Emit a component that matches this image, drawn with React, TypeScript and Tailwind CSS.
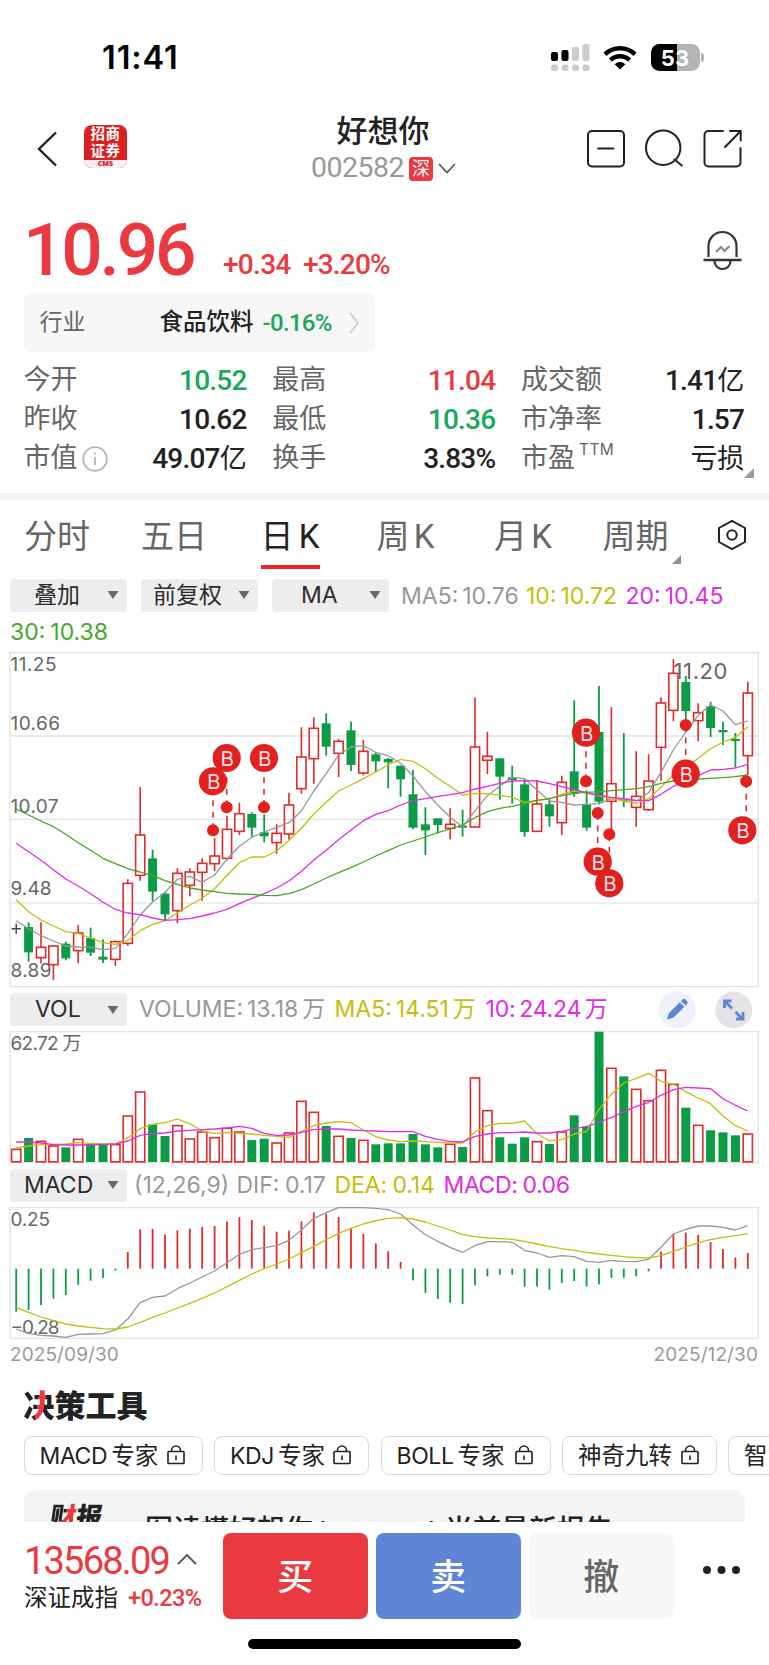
import React from 'react';

type Candle = [kind: 'R' | 'G', high: number, top: number, bottom: number, low: number];

const RED = '#e12a2a';
const GREEN = '#0d9c46';
const GRAY = '#97979b';
const YELLOW = '#c2bf0c';
const MAGENTA = '#e02be6';
const LEAF = '#46a628';

const xAt = (i: number) => 16.2 + 12.4 * i;
const px = (base: number) => (v: number) => base + v / 3;
const priceY = px(645);
const volY = px(985);
const macdY = px(1170);

const candles: Candle[] = [
  ['G', 832, 846, 922, 950], ['R', 832, 907, 938, 955], ['R', 900, 903, 959, 1005], ['G', 891, 896, 940, 946],
  ['R', 840, 864, 917, 955], ['G', 848, 879, 923, 933], ['G', 883, 935, 944, 954], ['R', 886, 890, 943, 963],
  ['R', 703, 715, 895, 902], ['R', 426, 570, 691, 707], ['G', 614, 640, 740, 768], ['G', 742, 746, 808, 826],
  ['R', 670, 685, 797, 835], ['R', 670, 681, 721, 754], ['R', 640, 655, 682, 767], ['R', 580, 633, 656, 678],
  ['R', 512, 553, 640, 647], ['R', 473, 506, 559, 570], ['G', 502, 507, 548, 575], ['G', 508, 562, 574, 592],
  ['R', 538, 565, 593, 626], ['R', 443, 480, 567, 584], ['R', 247, 336, 431, 446], ['R', 217, 250, 341, 416],
  ['G', 205, 235, 305, 332], ['R', 281, 289, 325, 396], ['G', 230, 256, 360, 378], ['R', 285, 319, 384, 391],
  ['G', 321, 328, 349, 381], ['G', 339, 342, 352, 430], ['G', 362, 362, 403, 455], ['G', 375, 448, 548, 553],
  ['G', 487, 538, 556, 630], ['G', 520, 520, 540, 565], ['R', 490, 538, 550, 583], ['G', 494, 542, 548, 575],
  ['R', 157, 306, 546, 546], ['R', 260, 334, 346, 387], ['G', 340, 340, 395, 464], ['G', 362, 397, 405, 476],
  ['G', 400, 418, 561, 575], ['R', 405, 477, 559, 559], ['G', 458, 478, 514, 545], ['R', 392, 412, 533, 570],
  ['G', 166, 379, 446, 455], ['G', 436, 478, 548, 557], ['G', 123, 261, 470, 478], ['R', 187, 416, 469, 565],
  ['G', 264, 461, 467, 486], ['R', 319, 454, 487, 545], ['R', 328, 408, 494, 497], ['R', 157, 174, 307, 407],
  ['R', 43, 85, 196, 229], ['G', 93, 111, 198, 225], ['R', 175, 203, 227, 289], ['G', 170, 184, 249, 276],
  ['G', 230, 255, 262, 300], ['G', 264, 282, 288, 366], ['R', 110, 144, 332, 390],
];

const ma5 = [827, 851, 872, 888, 903, 906, 907, 914, 911, 866, 810, 771, 742, 703, 694, 712, 690, 642, 604, 577, 561, 547, 533, 498, 438, 386, 330, 306, 302, 322, 332, 355, 393, 440, 480, 517, 546, 497, 452, 423, 397, 401, 435, 468, 472, 480, 478, 476, 461, 463, 468, 443, 382, 315, 261, 211, 180, 198, 239, 228];
const ma10 = [764, 800, 825, 843, 860, 865, 879, 893, 898, 886, 857, 838, 827, 804, 780, 760, 731, 691, 653, 636, 636, 618, 586, 550, 507, 472, 438, 420, 401, 381, 359, 343, 349, 371, 400, 424, 450, 445, 446, 451, 457, 472, 466, 462, 448, 438, 441, 453, 461, 468, 475, 461, 427, 390, 368, 340, 311, 291, 277, 245];
const ma20 = [595, 620, 646, 674, 702, 723, 746, 772, 793, 804, 809, 819, 826, 824, 821, 813, 804, 793, 776, 760, 746, 729, 708, 679, 645, 616, 584, 555, 527, 508, 497, 480, 467, 461, 454, 449, 443, 432, 424, 415, 408, 407, 408, 416, 425, 434, 444, 451, 457, 461, 466, 467, 448, 424, 406, 392, 375, 373, 369, 358];
const ma30 = [492, 510, 528, 545, 568, 593, 616, 640, 656, 671, 681, 692, 707, 718, 729, 735, 740, 745, 747, 748, 751, 752, 746, 734, 717, 699, 683, 668, 651, 633, 617, 600, 588, 576, 563, 552, 540, 518, 500, 490, 484, 476, 466, 461, 452, 445, 442, 440, 437, 434, 431, 425, 415, 408, 405, 402, 400, 398, 395, 390];

const volTops = [493, 459, 469, 483, 487, 463, 477, 479, 479, 393, 321, 418, 453, 422, 462, 441, 458, 430, 441, 465, 461, 474, 444, 349, 382, 423, 454, 459, 466, 478, 475, 475, 447, 478, 487, 478, 486, 279, 377, 457, 476, 457, 470, 477, 441, 391, 424, 140, 250, 274, 313, 347, 256, 298, 368, 421, 436, 442, 451, 447];
const volKinds = ['RGRRGRGGRR', 'RGGRRRRRRG', 'GRRRRGRGRG', 'GGGGGRGRRG', 'GGRGRGGGRG', 'RRRRGRGGGR'].join('');
const volMa5 = [489, 483, 479, 478, 477, 473, 475, 477, 477, 458, 431, 418, 413, 402, 416, 438, 446, 443, 445, 447, 451, 454, 457, 439, 422, 414, 410, 413, 435, 455, 465, 470, 468, 470, 472, 474, 474, 441, 422, 415, 415, 408, 446, 467, 464, 447, 440, 373, 328, 294, 280, 265, 289, 298, 320, 339, 356, 393, 422, 438];
const volMa10 = [471, 471, 474, 479, 480, 480, 480, 478, 477, 468, 451, 446, 444, 438, 436, 434, 432, 429, 424, 430, 445, 451, 450, 442, 434, 432, 432, 435, 437, 438, 440, 440, 440, 454, 463, 469, 471, 454, 447, 443, 443, 441, 444, 444, 439, 431, 425, 411, 398, 380, 364, 352, 331, 314, 307, 309, 311, 341, 361, 378];

const macdBars = [425, 420, 405, 386, 375, 344, 332, 324, 302, 246, 178, 177, 194, 181, 176, 171, 168, 154, 141, 150, 168, 185, 182, 154, 127, 132, 141, 174, 192, 220, 244, 276, 331, 369, 387, 398, 402, 346, 319, 314, 314, 350, 350, 359, 339, 333, 350, 343, 324, 323, 319, 304, 245, 191, 188, 195, 216, 237, 262, 249];
const dif = [477, 490, 496, 498, 502, 493, 492, 491, 480, 447, 398, 382, 378, 356, 339, 321, 303, 278, 253, 239, 233, 227, 211, 180, 145, 128, 113, 113, 113, 115, 119, 132, 165, 194, 214, 232, 247, 227, 215, 215, 217, 241, 249, 262, 257, 260, 274, 277, 271, 274, 275, 268, 232, 192, 178, 168, 168, 172, 180, 167];
const dea = [412, 427, 441, 452, 462, 468, 472, 476, 477, 471, 457, 442, 429, 414, 400, 385, 369, 350, 331, 312, 296, 282, 267, 248, 229, 209, 190, 175, 162, 152, 145, 143, 147, 156, 168, 180, 194, 200, 204, 206, 208, 214, 222, 230, 236, 241, 247, 252, 256, 260, 263, 264, 257, 244, 231, 218, 209, 202, 197, 191];

const markers = [
  { x: 226.7, b: 758, dot: 807.3, bx: 226.7 },
  { x: 213, b: 781.3, dot: 830.3, bx: 213 },
  { x: 264, b: 758, dot: 807.3, bx: 264 },
  { x: 586, b: 732.7, dot: 781.3, bx: 586 },
  { x: 597.7, b: 861.7, dot: 813, bx: 597.7 },
  { x: 609.3, b: 883.3, dot: 834.3, bx: 609.3 },
  { x: 685.7, b: 773.7, dot: 725, bx: 685.7 },
  { x: 746.2, b: 830.3, dot: 781.3, bx: 742.3 },
];

function Line({ data, y, color }: { data: number[]; y: (v: number) => number; color: string }) {
  return (
    <polyline
      points={data.map((v, i) => `${xAt(i).toFixed(1)},${y(v).toFixed(1)}`).join(' ')}
      fill="none"
      stroke={color}
      strokeWidth="1.3"
      strokeLinejoin="round"
    />
  );
}

function Label({ x, y, w, size = 19, color = '#666', children }: { x: number; y: number; w: number; size?: number; color?: string; children: string }) {
  return (
    <text x={x} y={y} fontSize={size} fill={color} textLength={w} className="font-[family-name:Inter,'Noto_Sans_CJK_SC',sans-serif]">
      {children}
    </text>
  );
}

function PriceChart() {
  return (
    <svg width="769" height="338" viewBox="0 651 769 338" className="block shrink-0">
      <g stroke="#e3e3e4" strokeWidth="1.3" fill="none">
        <rect x="10" y="652.6" width="748.3" height="334" />
        <path d="M10 736H758M10 819.4H758M10 903.1H758" />
      </g>
      <Label x={10.5} y={671} w={46}>11.25</Label>
      <Label x={10.5} y={730.4} w={49.5}>10.66</Label>
      <Label x={10.5} y={812.6} w={48}>10.07</Label>
      <Label x={10.5} y={894.6} w={41}>9.48</Label>
      <Label x={10.5} y={976.5} w={41}>8.89</Label>
      <path d="M16.2 923.5V934M11.6 928.8H20.8" stroke="#444" strokeWidth="1.4" />
      {candles.map(([kind, h, t, b, l], n) => {
        const x = xAt(n + 1);
        if (kind === 'G') {
          return (
            <g key={n} fill={GREEN}>
              <rect x={x - 0.9} y={priceY(h)} width="1.8" height={(l - h) / 3} />
              <rect x={x - 4.5} y={priceY(t)} width="9" height={(b - t) / 3} />
            </g>
          );
        }
        return (
          <g key={n} stroke={RED} strokeWidth="1.6" fill="none">
            <path d={`M${x} ${priceY(h)}V${priceY(t)}M${x} ${priceY(b)}V${priceY(l)}`} />
            <rect x={x - 4.6} y={priceY(t)} width="9.2" height={(b - t) / 3} />
          </g>
        );
      })}
      <Line data={ma5} y={priceY} color={GRAY} />
      <Line data={ma10} y={priceY} color={YELLOW} />
      <Line data={ma20} y={priceY} color={MAGENTA} />
      <Line data={ma30} y={priceY} color={LEAF} />
      <Label x={673.5} y={679.3} w={54} size={22}>11.20</Label>
      {markers.map((m, i) => (
        <g key={i}>
          <path d={`M${m.x} ${m.dot}V${m.b}`} stroke="#e22020" strokeWidth="1.5" strokeDasharray="6 5.5" strokeDashoffset="-1" />
          <circle cx={m.x} cy={m.dot} r="6" fill="#e22020" />
        </g>
      ))}
      {markers.map((m, i) => (
        <g key={i}>
          <circle cx={m.bx} cy={m.b} r="14.1" fill="#e22020" />
          <text x={m.bx + 0.6} y={m.b + 7.8} fontSize="20.5" fill="#fff" fillOpacity=".88" textAnchor="middle" className="font-[family-name:Inter,sans-serif]">B</text>
        </g>
      ))}
    </svg>
  );
}

function VolumeChart() {
  return (
    <svg width="769" height="134" viewBox="0 1030 769 134" className="block shrink-0">
      <rect x="10" y="1031.6" width="748.3" height="131" fill="none" stroke="#e3e3e4" strokeWidth="1.3" />
      <Label x={10.5} y={1050} w={71}>62.72 万</Label>
      {volTops.map((t, i) =>
        volKinds[i] === 'G' ? (
          <rect key={i} x={xAt(i) - 4.5} y={volY(t)} width="9" height={(531 - t) / 3} fill={GREEN} />
        ) : (
          <rect key={i} x={xAt(i) - 4.6} y={volY(t)} width="9.2" height={(530.5 - t) / 3} fill="none" stroke={RED} strokeWidth="1.6" />
        ),
      )}
      <Line data={volMa5} y={volY} color={YELLOW} />
      <Line data={volMa10} y={volY} color={MAGENTA} />
    </svg>
  );
}

function MacdChart() {
  return (
    <svg width="769" height="134" viewBox="0 1206 769 134" className="block shrink-0">
      <rect x="10" y="1207.6" width="748.3" height="130.8" fill="none" stroke="#e3e3e4" strokeWidth="1.3" />
      <Label x={10.5} y={1226.4} w={39.5}>0.25</Label>
      <Label x={10.5} y={1334.2} w={49}>−0.28</Label>
      {macdBars.map((v, i) => (
        <rect
          key={i}
          x={xAt(i) - 0.9}
          y={macdY(Math.min(v, 296))}
          width="1.8"
          height={Math.abs(v - 296) / 3}
          fill={v > 296 ? GREEN : RED}
        />
      ))}
      <Line data={dif} y={macdY} color={GRAY} />
      <Line data={dea} y={macdY} color={YELLOW} />
    </svg>
  );
}

function Chip({ children, className }: { children: React.ReactNode; className: string }) {
  return (
    <div className="flex h-[33px] w-[117px] shrink-0 items-center rounded-[4px] bg-[#ededed] text-[23px] leading-[33px] text-[#2c2c2e]">
      <span className={className}>{children}</span>
      <svg width="12" height="8" viewBox="0 0 12 8" className="mr-[8px] ml-auto">
        <path d="M0.5 0H11.5L6 8Z" fill="#69696b" />
      </svg>
    </div>
  );
}

function Lock() {
  return (
    <svg width="18" height="20" viewBox="0 0 18 20" fill="none" stroke="#222" strokeWidth="1.6" className="mb-[1px]">
      <rect x="1" y="6.5" width="16" height="12" rx="0.8" />
      <path d="M4.5 6.5V5.5a4.5 4.5 0 0 1 9 0V6.5M9 10.5v4.5" />
    </svg>
  );
}

const tools = [
  { latin: 'MACD', name: '专家', box: 'w-[179px]' },
  { latin: 'KDJ', name: '专家', box: 'w-[155px]' },
  { latin: 'BOLL', name: '专家', box: 'w-[170px]' },
  { latin: '', name: '神奇九转', box: 'w-[154.5px]' },
  { latin: '', name: '智能', box: 'w-[155px]' },
];

const stats = [
  [['今开', '10.52', '', 'text-[#1ba75c]'], ['最高', '11.04', '', 'text-[#eb3941]'], ['成交额', '1.41', '亿', 'text-[#222]']],
  [['昨收', '10.62', '', 'text-[#222]'], ['最低', '10.36', '', 'text-[#1ba75c]'], ['市净率', '1.57', '', 'text-[#222]']],
  [['市值', '49.07', '亿', 'text-[#222]'], ['换手', '3.83%', '', 'text-[#222]'], ['市盈', '', '亏损', 'text-[#222]']],
];

export default function App() {
  return (
    <main className="flex h-[1665px] w-[769px] flex-col overflow-hidden bg-white font-[family-name:Roboto,'Noto_Sans_CJK_SC',sans-serif] text-[#222]">
      {/* Status bar */}
      <div className="flex h-[115px] shrink-0 items-center pl-[102px] font-[family-name:Inter,sans-serif]">
        <span className="w-[448.5px] pt-[1px] text-[32.5px] leading-none font-semibold tracking-[0.9px] text-black">11:41</span>
        <svg width="39" height="28" viewBox="0 0 39 28">
          <rect x="0" y="8" width="7" height="9" rx="2" fill="#000" />
          <rect x="10.5" y="6" width="7" height="11" rx="2" fill="#000" />
          <rect x="21" y="3" width="7" height="14" rx="2" fill="#ccc" />
          <rect x="31.5" y="0" width="7" height="17" rx="2" fill="#ccc" />
          <g fill="#ccc">
            <rect x="0" y="20.5" width="7" height="6.5" rx="2.5" />
            <rect x="10.5" y="20.5" width="7" height="6.5" rx="2.5" />
            <rect x="21" y="20.5" width="7" height="6.5" rx="2.5" />
            <rect x="31.5" y="20.5" width="7" height="6.5" rx="2.5" />
          </g>
        </svg>
        <svg width="34" height="25" viewBox="0 0 34 25" className="ml-[13px]">
          <g fill="none" stroke="#000" strokeWidth="4.4">
            <path d="M2 9.4a21.5 21.5 0 0 1 30 0" />
            <path d="M7.4 15.1a13.8 13.8 0 0 1 19.2 0" />
          </g>
          <path d="M17 24.6 11.7 19.2a7.6 7.6 0 0 1 10.6 0Z" fill="#000" />
        </svg>
        <div className="ml-[14px] flex h-[27px] w-[49px] items-center justify-center rounded-[8.5px] bg-[linear-gradient(90deg,#000_53%,#b3b3b3_53%)] text-[22px] leading-none font-bold text-white">53</div>
        <span className="ml-[1.5px] h-[9px] w-[3px] rounded-r-full bg-[#b3b3b3]" />
      </div>

      {/* Title bar */}
      <header className="flex h-[85px] shrink-0">
        <svg width="22" height="36" viewBox="0 0 22 36" className="mt-[16px] ml-[36px]" fill="none" stroke="#222" strokeWidth="2.4">
          <path d="M20 1.5 3 18 20 34.5" />
        </svg>
        <div className="mt-[10px] ml-[26px] flex h-[43px] w-[43px] flex-col items-center overflow-hidden rounded-[8px] bg-[#dc1f20] text-[14.5px] text-white">
          <span className="h-[18px] leading-[20px] font-bold tracking-[0.5px]">招商</span>
          <span className="h-[17px] leading-[17px] font-bold tracking-[0.5px]">证券</span>
          <span className="h-[8px] w-full bg-[#f6f0f0] text-center font-['Open_Sans',sans-serif] text-[7px] leading-[7px] font-extrabold text-[#dc1f20]">CMS</span>
        </div>
        <div className="ml-[127.5px] flex w-[257px] flex-col items-center">
          <h1 className="h-[34px] text-[31px] leading-[34px] font-medium">好想你</h1>
          <div className="mt-[3px] ml-[1px] flex h-[33px] items-center">
            <span className="text-[28.5px] leading-none tracking-[-0.5px] text-[#999]">002582</span>
            <span className="ml-[5px] flex h-[24px] w-[24px] items-center justify-center rounded-[4px] bg-[#eb3941] text-[18px] leading-none text-white">深</span>
            <svg width="18" height="11" viewBox="0 0 18 11" className="ml-[5px]" fill="none" stroke="#555" strokeWidth="1.7">
              <path d="M1 1 9 9.5 17 1" />
            </svg>
          </div>
        </div>
        <svg width="160" height="42" viewBox="586 128 160 42" className="mt-[13px] mr-[24px] ml-auto" fill="none" stroke="#222" strokeWidth="2">
          <rect x="589" y="131" width="36" height="35.5" rx="4" />
          <path d="M599 148.5h15.5" strokeLinecap="round" />
          <circle cx="664.2" cy="147.7" r="17.2" />
          <path d="M675.5 159.5l7.3 6" strokeLinecap="round" />
          <path d="M724 131h-14.5a4 4 0 0 0-4 4v27.5a4 4 0 0 0 4 4h28a4 4 0 0 0 4-4V148M726 147l15.5-15.7M731 131h10.7v9.5" strokeLinecap="round" />
        </svg>
      </header>

      {/* Price */}
      <section className="flex h-[93px] shrink-0 items-start pl-[23px] font-medium text-[#eb3941]">
        <span className="mt-[13px] w-[200px] text-[73px] leading-[74px] tracking-[-3.2px]">10.96</span>
        <span className="mt-[49px] w-[80px] text-[28px] leading-[32px] tracking-[-0.7px]">+0.34</span>
        <span className="mt-[49px] text-[28px] leading-[32px] tracking-[-0.8px]">+3.20%</span>
        <svg width="42" height="42" viewBox="702 229 42 42" className="mt-[29px] mr-[26px] ml-auto" fill="none" stroke="#333" strokeWidth="2.2">
          <path d="M709.5 257V246a14 14 0 0 1 28 0v11" />
          <path d="M704.5 260h38" strokeWidth="2.4" />
          <path d="M715.5 261a8 8 0 0 0 16 0" />
          <path d="M717 252l5-5 3.5 4 5-5" stroke="#888" />
        </svg>
      </section>

      <section className="ml-6 flex h-[59px] w-[351px] shrink-0 items-center rounded-[6px] bg-[#f7f7f7] pl-[15.5px]">
        <span className="mt-[2px] w-[120px] text-[23px] text-[#666]">行业</span>
        <span className="mt-[1px] text-[23.5px] font-medium">食品饮料</span>
        <span className="ml-[9px] text-[24px] font-medium tracking-[-0.7px] text-[#1ba75c]">-0.16%</span>
        <svg width="12" height="22" viewBox="0 0 12 22" className="mr-[15px] ml-auto" fill="none" stroke="#ccc" strokeWidth="1.8">
          <path d="M2 1l8 10-8 10" />
        </svg>
      </section>

      {/* Stats */}
      <section className="mt-[9px] flex h-[132px] shrink-0 flex-col pl-[23.5px]">
        {stats.map((row, r) => (
          <div key={r} className="flex h-[39px] gap-[25.8px] text-[27px] leading-[39px]">
            {row.map(([name, value, unit, tone], c) => (
              <div key={name} className="flex w-[223px] items-center justify-between">
                <span className="flex items-center text-[27px] text-[#666]">
                  {name}
                  {name === '市值' && (
                    <svg width="26" height="26" viewBox="0 0 26 26" className="ml-[4px]" fill="none" stroke="#b5b5b5" strokeWidth="1.8">
                      <circle cx="13" cy="13" r="11.8" />
                      <path d="M13 11v8M13 6.5v2" />
                    </svg>
                  )}
                  {name === '市盈' && <sup className="-top-[9px] ml-[4px] font-[family-name:Inter,sans-serif] text-[15.5px] leading-none tracking-[0.3px]">TTM</sup>}
                </span>
                <span className={`relative text-[28px] font-medium tracking-[-0.8px] ${tone}`}>
                  {value}
                  {unit && <span className="text-[27px] font-normal tracking-[-0.2px]">{unit}</span>}
                  {r === 2 && c === 2 && (
                    <svg width="10" height="10" viewBox="0 0 10 10" className="absolute -right-[10px] bottom-[1px]">
                      <path d="M10 0V10H0Z" fill="#999" />
                    </svg>
                  )}
                </span>
              </div>
            ))}
          </div>
        ))}
      </section>
      <div className="h-[7px] shrink-0 bg-[#f4f4f4]" />

      {/* Tabs */}
      <nav className="flex h-[78px] shrink-0 pl-[24px] text-[33px] leading-[74px] text-[#666]">
        <span className="w-[117px]">分时</span>
        <span className="w-[119.5px]">五日</span>
        <span className="relative w-[116px] text-[#222] [word-spacing:-3px]">
          日 K
          <i className="absolute top-[65px] left-0 h-[3.5px] w-[59px] bg-[#eb2424]" />
        </span>
        <span className="w-[117.5px] [word-spacing:-4px]">周 K</span>
        <span className="w-[108.5px] [word-spacing:-4px]">月 K</span>
        <span className="relative w-[114px]">
          周期
          <svg width="9" height="9" viewBox="0 0 9 9" className="absolute top-[55px] left-[69px]">
            <path d="M9 0V9H0Z" fill="#8b939d" />
          </svg>
        </span>
        <svg width="30" height="32" viewBox="0 0 30 32" className="mt-[19px]" fill="none" stroke="#222" strokeWidth="2">
          <path d="M15 1.8 28 9v14L15 30.2 2 23V9Z" strokeLinejoin="round" />
          <circle cx="15" cy="16" r="4.7" />
        </svg>
      </nav>

      {/* Indicators */}
      <section className="mt-[0.5px] flex h-[33px] shrink-0 pl-[10px] font-[family-name:Inter,'Noto_Sans_CJK_SC',sans-serif] text-[23px] leading-[34px]">
        <Chip className="pl-[24px]">叠加</Chip>
        <span className="w-[14px]" />
        <Chip className="pl-[12px]">前复权</Chip>
        <span className="w-[14px]" />
        <Chip className="pl-[29px]">MA</Chip>
        <span className="ml-[12px] w-[125px] whitespace-nowrap text-[#97979b] [word-spacing:-2.5px]">MA5: 10.76</span>
        <span className="w-[99.5px] whitespace-nowrap text-[#c2bf0c] [word-spacing:-2.5px]">10: 10.72</span>
        <span className="whitespace-nowrap text-[#e02be6] [word-spacing:-2.5px]">20: 10.45</span>
      </section>
      <div className="h-[39.5px] shrink-0 pl-[10px] font-[family-name:Inter,sans-serif] text-[23px] leading-[41px] text-[#46a628] [word-spacing:-1.5px]">30: 10.38</div>

      <PriceChart />
      <section className="flex h-[41px] shrink-0 items-center pl-[10px] font-[family-name:Inter,'Noto_Sans_CJK_SC',sans-serif] text-[23px] leading-[41px] whitespace-nowrap [word-spacing:-2.5px]">
        <Chip className="pl-[25px]">VOL</Chip>
        <span className="ml-[12px] w-[195.5px] text-[#97979b]">VOLUME: 13.18 万</span>
        <span className="w-[151px] text-[#c2bf0c]">MA5: 14.51 万</span>
        <span className="tracking-[-0.2px] text-[#e02be6]">10: 24.24 万</span>
        <svg width="96" height="38" viewBox="657 990.5 96 38" className="mr-[16px] ml-auto">
          <circle cx="677" cy="1009.5" r="18.5" fill="#ecf1fb" />
          <path d="M667 1019l1.8-6.3 11-11 4.5 4.5-11 11ZM681 1000.5l1.7-1.7q1.2-1 2.4 0l2.1 2.1q1 1.2 0 2.4l-1.7 1.7Z" fill="#5b84d6" />
          <circle cx="733.7" cy="1009.5" r="18.5" fill="#e4e4e6" />
          <g fill="none" stroke="#5b84d6" strokeWidth="2.8">
            <path d="M732 1008l-7-7M724.5 1007.5V1000.5H731.5M735.5 1011.5l7 7M743 1011.5V1018.5H736" />
          </g>
        </svg>
      </section>
      <VolumeChart />
      <section className="flex h-[42px] shrink-0 items-center pl-[10px] font-[family-name:Inter,sans-serif] text-[23px] leading-[42px] whitespace-nowrap [word-spacing:-1px]">
        <Chip className="pl-[14px]">MACD</Chip>
        <span className="ml-[7px] w-[102.5px] text-[#97979b]">(12,26,9)</span>
        <span className="w-[98px] text-[#97979b]">DIF: 0.17</span>
        <span className="w-[109px] tracking-[-0.1px] text-[#c2bf0c]">DEA: 0.14</span>
        <span className="tracking-[-0.4px] text-[#e02be6]">MACD: 0.06</span>
      </section>
      <MacdChart />
      <div className="flex h-[36px] shrink-0 justify-between pr-[11px] pl-[10px] font-[family-name:Inter,sans-serif] text-[19px] leading-[29px] tracking-[0.1px] text-[#9a9a9c]">
        <span>2025/09/30</span>
        <span>2025/12/30</span>
      </div>

      {/* Tools */}
      <h2 className="mt-[10px] h-[40px] shrink-0 pl-[23.5px] text-[31px] leading-[41px] font-black">
        <span className="bg-[linear-gradient(100deg,#222_0_43%,#eb3941_43%_62%,#222_62%)] bg-clip-text text-transparent">决</span>策工具
      </h2>
      <section className="mt-[10px] flex h-[39px] shrink-0 gap-[11.5px] overflow-hidden pl-[23.5px] whitespace-nowrap">
        {tools.map((t, i) => (
          <div key={i} className={`flex shrink-0 items-center justify-between rounded-[8px] border-[1.5px] border-[#d8d8d8] pr-[17px] pl-[15px] ${t.box}`}>
            <span className="mt-[1px] flex items-center gap-[4px]">
              {t.latin && <span className="font-[family-name:Inter,sans-serif] text-[23px] tracking-[-0.4px]">{t.latin}</span>}
              <span className="text-[23.5px] leading-[34px]">{t.name}</span>
            </span>
            <Lock />
          </div>
        ))}
      </section>
      <section className="mt-[15px] ml-6 flex h-[31.5px] w-[721px] shrink-0 overflow-hidden rounded-t-[12px] bg-[#f4f4f4]">
        <span className="mt-[9px] ml-[26px] h-[40px] w-[95px] skew-x-[-8deg] text-[26px] leading-[36px] font-black">
          <span className="bg-[linear-gradient(105deg,#222_0_52%,#eb3941_52%_80%,#222_80%)] bg-clip-text text-transparent">财</span>报
        </span>
        <span className="mt-[20.5px] flex text-[28px] leading-[40px] font-medium whitespace-nowrap">
          图读懂好想你
          <span className="w-[132px] pl-[3px] font-[family-name:Inter,sans-serif] text-[26px] leading-[42px] tracking-[0.7px]">(002582)</span>
          当前最新报告
        </span>
      </section>

      {/* Trade bar */}
      <footer className="flex h-[98px] shrink-0 gap-[8.5px] pt-[11.5px] pl-6">
        <div className="w-[190.5px]">
          <div className="mt-[7px] flex items-center text-[38px] leading-[42px] tracking-[-1.8px] text-[#eb3941]">
            13568.09
            <svg width="20" height="11" viewBox="0 0 20 11" className="mb-[4px] ml-[8px]" fill="none" stroke="#555" strokeWidth="1.8">
              <path d="M1 10 10 1l9 9" />
            </svg>
          </div>
          <div className="flex text-[23.5px] leading-[32px] whitespace-nowrap">
            深证成指
            <span className="ml-[10px] font-medium tracking-[-0.6px] text-[#eb3941]">+0.23%</span>
          </div>
        </div>
        <button className="h-[86px] w-[144.5px] rounded-[8px] bg-[#ea3a40] pt-[4px] text-[36px] font-medium text-white">买</button>
        <button className="h-[86px] w-[144.5px] rounded-[8px] bg-[#5e86d4] pt-[4px] text-[36px] font-medium text-white">卖</button>
        <button className="h-[86px] w-[144.5px] rounded-[8px] bg-[#f7f7f7] pt-[4px] text-[36px] font-medium text-[#666]">撤</button>
        <svg width="40" height="10" viewBox="0 0 40 10" className="mt-[31.5px] ml-[20px]" fill="#222">
          <circle cx="5" cy="5" r="4" />
          <circle cx="19.5" cy="5" r="4" />
          <circle cx="34" cy="5" r="4" />
        </svg>
      </footer>
      <div className="mt-[19.5px] h-[10px] w-[273.5px] shrink-0 self-center rounded-full bg-black" />
    </main>
  );
}
